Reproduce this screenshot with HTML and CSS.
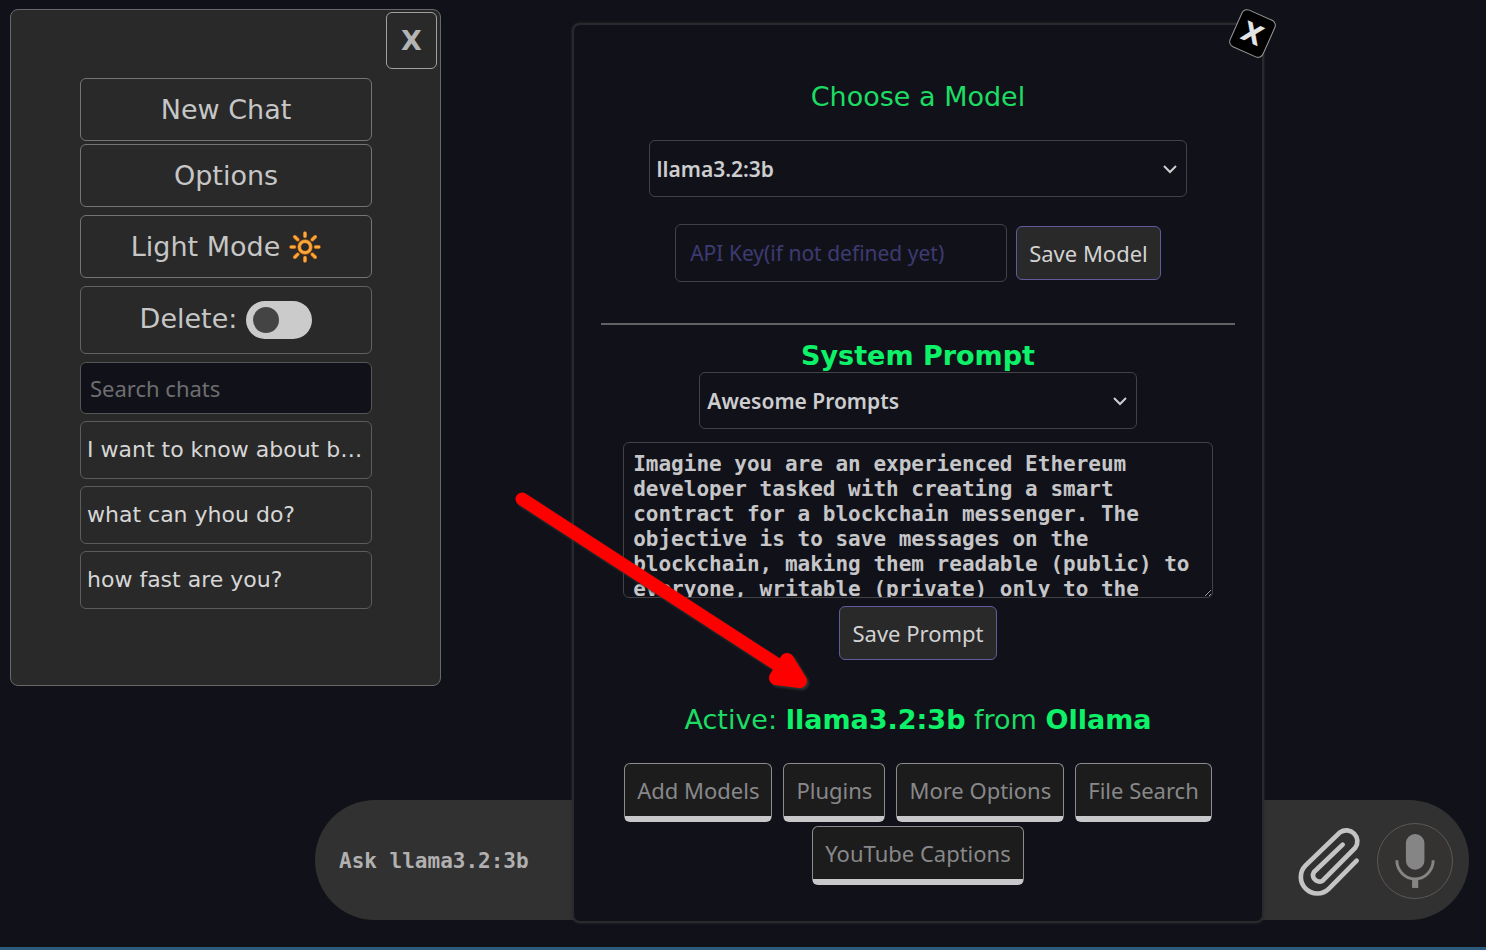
FILE: index.html
```html
<!DOCTYPE html>
<html lang="en">
<head>
<meta charset="utf-8">
<title>Chat</title>
<link rel="stylesheet" href="styles.css">
</head>
<body>
<div class="app">
  <aside class="sidebar">
    <button class="sidebar-close" aria-label="Close menu">X</button>
    <nav class="menu">
      <div class="menu-pair">
        <button class="menu-button">New Chat</button>
        <button class="menu-button">Options</button>
      </div>
      <button class="menu-button">Light Mode
        <svg class="sun" viewBox="0 0 96 96" aria-hidden="true">
          <g fill="none" stroke="#b86410" stroke-width="12" stroke-linecap="round">
            <circle cx="48" cy="48" r="17"/>
            <path d="M48 7v9M48 80v9M7 48h9M80 48h9M18 18l8 8M70 70l8 8M78 18l-8 8M26 70l-8 8"/>
          </g>
          <g fill="none" stroke="#fca83c" stroke-width="8" stroke-linecap="round">
            <circle cx="48" cy="48" r="17"/>
            <path d="M48 6v10M48 80v10M6 48h10M80 48h10M17 17l9 9M70 70l9 9M79 17l-9 9M26 70l-9 9"/>
          </g>
        </svg>
      </button>
      <label class="menu-button menu-toggle">Delete:
        <input class="switch" type="checkbox">
      </label>
      <input class="search" type="text" placeholder="Search chats" aria-label="Search chats">
      <button class="chat-item">I want to know about b…</button>
      <button class="chat-item">what can yhou do?</button>
      <button class="chat-item">how fast are you?</button>
    </nav>
  </aside>

  <form class="composer">
    <input class="composer-input" type="text" placeholder="Ask llama3.2:3b" aria-label="Message">
    <button class="icon-button" type="button" aria-label="Attach file">
      <svg class="clip" viewBox="126 139 192 210" aria-hidden="true">
        <path d="M302 243L219 327A49 49 0 0 1 149 257L252 158A33 33 0 0 1 298 204L200 303A19 19 0 0 1 174 277L260 195" fill="none" stroke="#c4c4c4" stroke-width="14" stroke-linecap="round"/>
      </svg>
    </button>
    <button class="icon-button mic" type="button" aria-label="Voice input">
      <svg class="mic-icon" viewBox="363 131 228 228" aria-hidden="true">
        <rect x="449" y="162" width="57" height="110" rx="28" fill="#858585"/>
        <path d="M421 243A56 57 0 0 0 533 243" fill="none" stroke="#858585" stroke-width="9"/>
        <rect x="468" y="298" width="19" height="30" fill="#858585"/>
      </svg>
    </button>
  </form>

  <section class="modal">
    <button class="modal-close" aria-label="Close options">X</button>
    <h2 class="title">Choose a Model</h2>
    <div class="select-box model-select">
      <select class="select" aria-label="Model"><option>llama3.2:3b</option></select>
      <svg class="chevron" viewBox="0 0 14 10" aria-hidden="true"><path d="M1 2l6 6 6-6" fill="none" stroke="#cfcfd2" stroke-width="2"/></svg>
    </div>
    <div class="key-row">
      <input class="key-input" type="text" placeholder="API Key(if not defined yet)" aria-label="API key">
      <button class="save">Save Model</button>
    </div>
    <hr class="rule">
    <h2 class="title title-strong">System Prompt</h2>
    <div class="select-box prompt-select">
      <select class="select" aria-label="Prompt"><option>Awesome Prompts</option></select>
      <svg class="chevron" viewBox="0 0 14 10" aria-hidden="true"><path d="M1 2l6 6 6-6" fill="none" stroke="#cfcfd2" stroke-width="2"/></svg>
    </div>
    <textarea class="prompt-text" aria-label="System prompt">Imagine you are an experienced Ethereum developer tasked with creating a smart contract for a blockchain messenger. The objective is to save messages on the blockchain, making them readable (public) to everyone, writable (private) only to the</textarea>
    <button class="save">Save Prompt</button>
    <p class="active">Active: <b>llama3.2:3b</b> from <b>Ollama</b></p>
    <div class="actions">
      <button class="action">Add Models</button>
      <button class="action">Plugins</button>
      <button class="action">More Options</button>
      <button class="action">File Search</button>
      <button class="action">YouTube Captions</button>
    </div>
  </section>

  <svg class="pointer" viewBox="0 0 300 204" aria-hidden="true">
    <path d="M12 14L268 180" fill="none" stroke="#f00" stroke-width="13" stroke-linecap="round"/>
    <path d="M277 175l-11 18 24 3z" fill="#f00" stroke="#f00" stroke-width="14" stroke-linejoin="round"/>
  </svg>
</div>
</body>
</html>
```
FILE: styles.css
```css
* {
  box-sizing: border-box;
}

body {
  margin: 0;
  background: #111219;
  color: #ccc;
  font-family: "DejaVu Sans", sans-serif;
}

button,
input,
select,
textarea {
  margin: 0;
  color: inherit;
  font-family: "Noto Sans", sans-serif;
  font-size: 22px;
  outline: none;
}

.app {
  position: relative;
  display: flex;
  flex-direction: column;
  justify-content: space-between;
  min-height: 100vh;
  padding: 9px 17px 27px 10px;
  border-bottom: 3px solid #2b5a7d;
}

/* Sidebar */

.sidebar {
  display: flex;
  flex-direction: column;
  gap: 9px;
  width: 431px;
  padding: 2px 3px 76px;
  border: 1px solid #686868;
  border-radius: 8px;
  background: #292929;
}

.sidebar-close {
  align-self: flex-end;
  width: 51px;
  height: 57px;
  padding: 0;
  border: 1px solid #a0a0a0;
  border-radius: 6px;
  background: #292929;
  color: #b4b4b4;
  font: bold 27px "DejaVu Sans", sans-serif;
}

.menu {
  display: flex;
  flex-direction: column;
  gap: 7px;
  padding: 0 65px 0 66px;
}

.menu-pair {
  display: flex;
  flex-direction: column;
  gap: 3px;
}

.menu-button {
  display: flex;
  align-items: center;
  justify-content: center;
  gap: 9px;
  width: 100%;
  height: 63px;
  padding: 0;
  border: 1px solid #747474;
  border-radius: 6px;
  background: #292929;
  color: #c6c6c6;
  font: 27px "DejaVu Sans", sans-serif;
}

.menu-pair + .menu-button {
  margin: 1px 0;
}

.menu-toggle {
  height: 68px;
  margin-bottom: 1px;
  padding-bottom: 4px;
  border-color: #626262;
}

.sun {
  width: 32px;
  height: 32px;
}

.switch {
  display: flex;
  align-items: center;
  width: 66px;
  height: 38px;
  margin-top: 4px;
  padding-left: 7px;
  border-radius: 19px;
  background: #cbcbcb;
  appearance: none;
}

.switch::before {
  width: 26px;
  height: 26px;
  border-radius: 50%;
  background: #444;
  content: "";
}

.switch:checked {
  justify-content: flex-end;
  padding: 0 7px 0 0;
}

.search {
  width: 100%;
  height: 52px;
  padding: 0 9px;
  border: 1px solid #555;
  border-radius: 6px;
  background: #111219;
}

.search::placeholder {
  color: #6e6e70;
}

.chat-item {
  width: 100%;
  height: 58px;
  padding: 0 6px 2px;
  overflow: hidden;
  border: 1px solid #5c5c5c;
  border-radius: 6px;
  background: #292929;
  color: #d6d6d6;
  font: 22px "DejaVu Sans", sans-serif;
  text-align: left;
  text-overflow: ellipsis;
  white-space: nowrap;
}

/* Message bar */

.composer {
  display: flex;
  align-items: center;
  height: 120px;
  margin-left: 305px;
  padding: 2px 16px 0 24px;
  border-radius: 60px;
  background: #313131;
}

.composer-input {
  flex: 1;
  min-width: 0;
  padding: 0;
  border: 0;
  background: transparent;
  font: bold 21px "DejaVu Sans Mono", monospace;
}

.composer-input::placeholder {
  color: #b0b0b0;
}

.icon-button {
  display: flex;
  margin-right: 15px;
  padding: 0;
  border: 0;
  background: transparent;
}

.clip {
  width: 64px;
  height: 70px;
}

.mic {
  margin: 0;
  border: 1px solid #5a5858;
  border-radius: 50%;
  background: #353232;
}

.mic-icon {
  width: 74px;
  height: 74px;
}

/* Options dialog */

.modal {
  position: absolute;
  top: 23px;
  right: 222px;
  left: 572px;
  display: flex;
  flex-direction: column;
  align-items: center;
  padding: 55px 27px 36px;
  border: 2px solid #29292e;
  border-radius: 8px;
  background: #111219;
  box-shadow: 0 0 3px #2c2c30;
}

.modal-close {
  position: absolute;
  top: -12px;
  right: -9px;
  width: 37px;
  height: 41px;
  padding: 0;
  border: 1px solid #999;
  border-radius: 6px;
  background: #000;
  color: #e4e4e4;
  font: bold 27px "DejaVu Sans", sans-serif;
  transform: rotate(24deg);
}

.title {
  margin: 0;
  color: #1cdc64;
  font-size: 27px;
  font-weight: normal;
  line-height: 33px;
}

.title-strong {
  margin-top: 14px;
  color: #0df268;
  font-weight: bold;
}

.select-box {
  position: relative;
}

.model-select {
  width: 85%;
  margin-top: 27px;
}

.prompt-select {
  width: 69%;
}

.select {
  display: block;
  width: 100%;
  height: 57px;
  padding: 0 7px;
  border: 1px solid #424246;
  border-radius: 6px;
  background: transparent;
  color: #cdcdd0;
  font-size: 21px;
  font-weight: 600;
  appearance: none;
}

.chevron {
  position: absolute;
  top: 24px;
  right: 10px;
  width: 14px;
  height: 10px;
  pointer-events: none;
}

.key-row {
  display: flex;
  align-items: center;
  gap: 9px;
  margin-top: 27px;
}

.key-input {
  width: 332px;
  height: 58px;
  padding: 0 14px;
  border: 1px solid #424246;
  border-radius: 6px;
  background: transparent;
  font-size: 21px;
}

.key-input::placeholder {
  color: #3e3a72;
}

.save {
  height: 54px;
  padding: 0 12px;
  border: 1px solid #625a9c;
  border-radius: 6px;
  background: #292929;
  color: #d2d2d2;
}

.rule {
  width: 100%;
  height: 2px;
  margin: 41px 0 0;
  border: 0;
  background: #626265;
}

.prompt-text {
  width: 93%;
  height: 156px;
  margin: 13px 0 8px;
  padding: 9px;
  overflow: hidden;
  border: 1px solid #424246;
  border-radius: 6px;
  background: transparent;
  color: #c6c6c9;
  font: bold 21px/25px "DejaVu Sans Mono", monospace;
}

.active {
  margin: 43px 0 0;
  color: #1cdc64;
  font-size: 27px;
  line-height: 33px;
}

.active b {
  color: #0df268;
}

.actions {
  display: flex;
  flex-wrap: wrap;
  justify-content: center;
  gap: 4px 11px;
  margin-top: 27px;
}

.action {
  height: 59px;
  padding: 0 12px;
  border: 1px solid #8c8c8f;
  border-bottom: 6px solid #c8c8cb;
  border-radius: 6px;
  background: #1c1c1c;
  color: #88888a;
}

/* Callout arrow */

.pointer {
  position: absolute;
  top: 485px;
  left: 510px;
  width: 300px;
  height: 204px;
  filter: drop-shadow(2px 2px 1px #333);
  pointer-events: none;
}
```
